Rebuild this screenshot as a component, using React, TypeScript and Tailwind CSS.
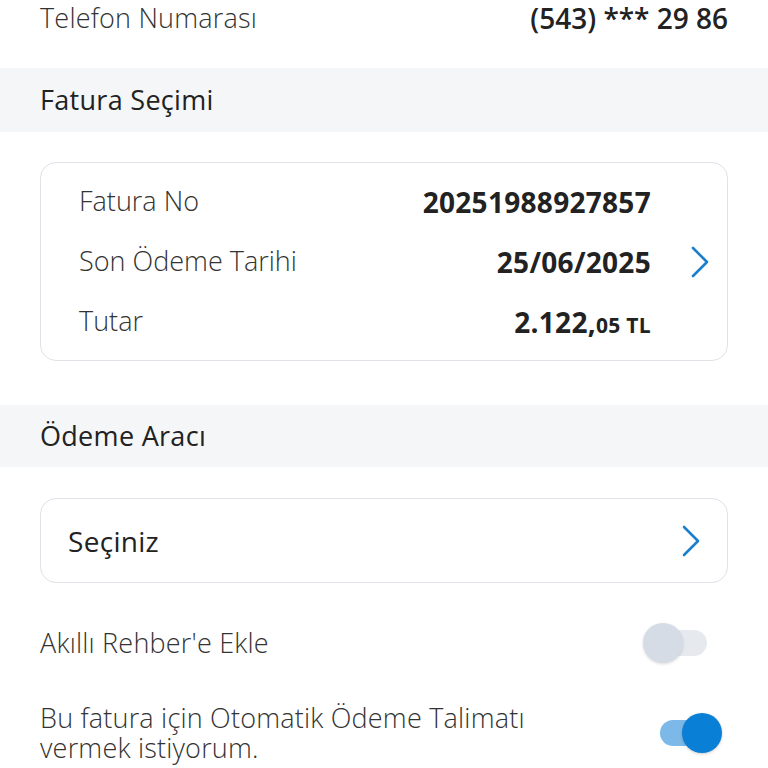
import React from "react";

const font = { fontFamily: '"Open Sans", "Noto Sans", sans-serif' };

function Chevron() {
  return (
    <svg width="18" height="32" viewBox="0 0 18 32" fill="none">
      <path d="M2 2 L16 16 L2 30" stroke="#1a7fcc" strokeWidth="2.6" strokeLinecap="round" strokeLinejoin="round" />
    </svg>
  );
}

function Row({ label, children }: { label: string; children: React.ReactNode }) {
  return (
    <div className="flex h-[60px] items-center justify-between">
      <span className="text-[27px] font-light text-[#333]">{label}</span>
      <span className="text-[28px] font-bold tracking-[0.3px] text-[#222]">{children}</span>
    </div>
  );
}

export default function App() {
  return (
    <div className="w-[768px] h-[768px] overflow-hidden bg-white" style={font}>
      <div className="flex h-[36px] items-center justify-between px-10">
        <span className="text-[27px] font-light tracking-[0.2px] text-[#333]">Telefon Numarası</span>
        <span className="text-[28px] font-semibold text-[#222]">(543) *** 29 86</span>
      </div>

      <div className="mt-[32px] flex h-[64px] items-center bg-[#f5f6f8] px-10">
        <span className="text-[27px] font-normal tracking-[0.3px] text-[#222]">Fatura Seçimi</span>
      </div>

      <div className="mx-10 mt-[30px] flex h-[199px] items-center rounded-2xl border border-[#dfe2e7] pl-[38px] pr-[18px]">
        <div className="flex-1">
          <Row label="Fatura No">20251988927857</Row>
          <Row label="Son Ödeme Tarihi">25/06/2025</Row>
          <Row label="Tutar">
            2.122,<span className="text-[21px]">05 TL</span>
          </Row>
        </div>
        <div className="ml-[40px] flex items-center">
          <Chevron />
        </div>
      </div>

      <div className="mt-[44px] flex h-[62px] items-center bg-[#f5f6f8] px-10">
        <span className="text-[27px] font-normal tracking-[0.3px] text-[#222]">Ödeme Aracı</span>
      </div>

      <div className="mx-10 mt-[31px] flex h-[85px] items-center justify-between rounded-2xl border border-[#dfe2e7] pl-[27px] pr-[27px]">
        <span className="text-[28px] font-normal tracking-[0.3px] text-[#222]">Seçiniz</span>
        <Chevron />
      </div>

      <div className="mt-[30px] flex h-[60px] items-center justify-between pl-10 pr-[61px]">
        <span className="text-[27px] font-light tracking-[0.2px] text-[#333]">Akıllı Rehber'e Ekle</span>
        <div className="relative h-[40px] w-[64px]">
          <div className="absolute left-[7px] right-0 top-[7px] h-[26px] rounded-full bg-[#e6e9ee]" />
          <div className="absolute left-0 top-0 h-[40px] w-[40px] rounded-full bg-[#d6dce5] shadow-[0_1px_3px_rgba(0,0,0,0.15)]" />
        </div>
      </div>

      <div className="mt-[30px] flex items-center justify-between pl-10 pr-[46px]">
        <span className="text-[27px] font-light leading-[30px] tracking-[0.2px] text-[#333]">
          Bu fatura için Otomatik Ödeme Talimatı
          <br />
          vermek istiyorum.
        </span>
        <div className="relative h-[40px] w-[62px]">
          <div className="absolute left-0 right-[7px] top-[7px] h-[26px] rounded-full bg-[#7db9e8]" />
          <div className="absolute right-0 top-0 h-[40px] w-[40px] rounded-full bg-[#0a7fd6] shadow-[0_1px_3px_rgba(0,0,0,0.2)]" />
        </div>
      </div>
    </div>
  );
}
